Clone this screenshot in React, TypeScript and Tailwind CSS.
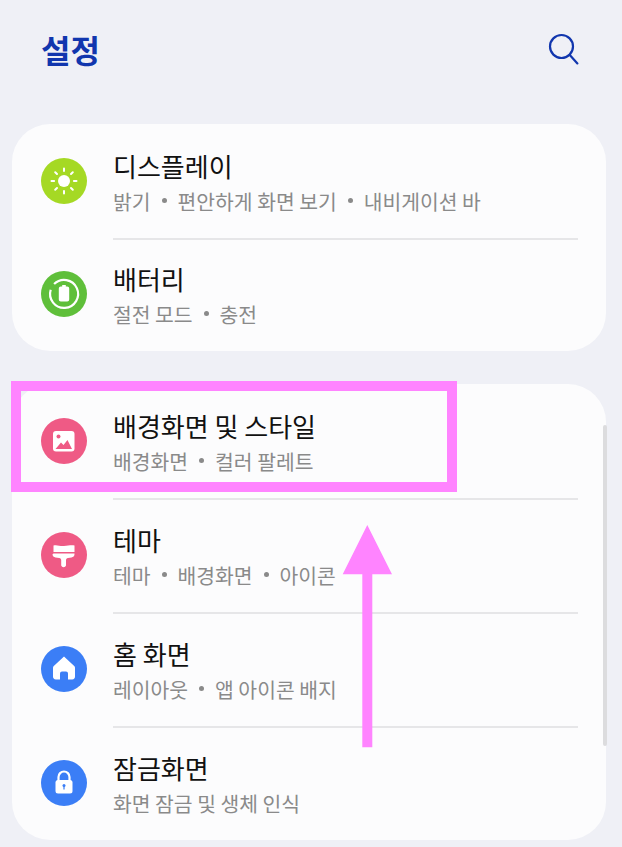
import type { ReactNode } from 'react';

function SunIcon() {
  return (
    <svg width="46" height="46" viewBox="0 0 46 46">
      <circle cx="23" cy="23" r="6" fill="#fff" />
      <g stroke="#fff" strokeWidth="2" strokeLinecap="round">
        <path d="M23 10.500v2.600M23 32.900v2.600M10.500 23h2.600M32.900 23h2.600M14.200 14.200l1.800 1.800M30 30l1.800 1.800M14.200 31.800L16 30M30 16l1.800-1.800" />
      </g>
    </svg>
  );
}

function BatteryIcon() {
  return (
    <svg width="46" height="46" viewBox="0 0 46 46" fill="none">
      <path d="M9.700 18.800A14 14 0 1 0 13.100 13.100" stroke="#fff" strokeWidth="2.200" />
      <path d="M21.200 14h3.600v1.500h1.400a2 2 0 0 1 2 2v11a2 2 0 0 1-2 2h-6.400a2 2 0 0 1-2-2v-11a2 2 0 0 1 2-2h1.400z" fill="#fff" />
    </svg>
  );
}

function WallpaperIcon() {
  return (
    <svg width="46" height="46" viewBox="0 0 46 46">
      <rect x="12" y="13" width="21.500" height="20.500" rx="3" fill="#fff" />
      <circle cx="17.500" cy="18.500" r="2" fill="#ef5a85" />
      <path d="M14.500 31l5.500-6.500 2.500 2.400 4-5 4.500 9.100z" fill="#ef5a85" />
    </svg>
  );
}

function BrushIcon() {
  return (
    <svg width="46" height="46" viewBox="0 0 46 46">
      <path d="M12.500 13.500c3.500-1 6 .8 10.500.5 4-.3 7.500-1.300 10.500-.5V20h-21z" fill="#fff" />
      <path d="M12.500 21.500h21v.8c0 1.800-1.300 3-3 3.200l-3.500.5c-1.300.2-2 1-2 2.200v5.300a2.500 2.500 0 0 1-4.800 0v-5.300c0-1.200-.7-2-2-2.200l-3.700-.5c-1.700-.2-3-1.400-3-3.200z" fill="#fff" />
    </svg>
  );
}

function HomeIcon() {
  return (
    <svg width="46" height="46" viewBox="0 0 46 46">
      <path
        d="M23 10.500L33.200 20a2.400 2.400 0 0 1 .8 1.800v8.800a2.800 2.800 0 0 1-2.800 2.800H27V27.500a2 2 0 0 0-2-2h-4a2 2 0 0 0-2 2v5.900h-4.200a2.800 2.800 0 0 1-2.800-2.800v-8.800c0-.7.3-1.300.8-1.800z"
        fill="#fff"
      />
    </svg>
  );
}

function LockIcon() {
  return (
    <svg width="46" height="46" viewBox="0 0 46 46">
      <path d="M17.500 21v-4a5.500 5.500 0 0 1 11 0v4" fill="none" stroke="#fff" strokeWidth="2.200" />
      <rect x="14.500" y="20" width="17" height="13.500" rx="2.500" fill="#fff" />
      <circle cx="23" cy="25.500" r="1.500" fill="#3b7ef6" />
      <rect x="22.400" y="26" width="1.200" height="3.500" fill="#3b7ef6" />
    </svg>
  );
}

function Row({ icon, color, title, sub, divider }: { icon: ReactNode; color: string; title: string; sub: string[]; divider?: boolean }) {
  return (
    <div className="h-[114px] flex flex-col">
      <div className="flex-1 flex items-center pl-[29px]">
        <div className={`w-[46px] h-[46px] rounded-full shrink-0 ${color}`}>{icon}</div>
        <div className="ml-[26px]">
          <div className="text-[26px] leading-[34px] text-[#111]">{title}</div>
          <div className="mt-[5px] text-[20.4px] leading-[26px] text-[#8a8a8a] flex items-center">
            {sub.map((s, i) => (
              <span key={s} className="flex items-center">
                {i > 0 && <span className="w-[5px] h-[5px] rounded-full bg-[#8a8a8a] mx-[11px]" />}
                {s}
              </span>
            ))}
          </div>
        </div>
      </div>
      {divider && <div className="h-[2px] -mb-[2px] bg-[#e6e6e8] ml-[101px] mr-[28px]" />}
    </div>
  );
}

export default function App() {
  return (
    <div className="relative w-[622px] h-[847px] overflow-hidden bg-[#eff0f6] font-['Noto_Sans_CJK_KR','Noto_Sans',sans-serif]">
      <header className="h-[124px] flex items-start justify-between pl-[41px] pr-[42px] pt-[28px]">
        <h1 className="text-[32px] leading-[42px] font-bold text-[#1136ae]">설정</h1>
        <svg width="32" height="32" viewBox="0 0 32 32" fill="none" stroke="#1136ae" strokeWidth="2.200" className="mt-[5px]">
          <circle cx="13.500" cy="13.500" r="11.500" />
          <path d="M21.800 22l7.600 8.400" strokeLinecap="round" />
        </svg>
      </header>

      <section className="mx-[12px] w-[594px] bg-[#fcfcfd] rounded-[38px] mb-[33px]">
        <Row icon={<SunIcon />} color="bg-[#a5d924]" title="디스플레이" sub={['밝기', '편안하게 화면 보기', '내비게이션 바']} divider />
        <div className="-mt-px">
          <Row icon={<BatteryIcon />} color="bg-[#5fbf3a]" title="배터리" sub={['절전 모드', '충전']} />
        </div>
      </section>

      <section className="relative mx-[12px] w-[594px] bg-[#fcfcfd] rounded-[38px]">
        <Row icon={<WallpaperIcon />} color="bg-[#ef5a85]" title="배경화면 및 스타일" sub={['배경화면', '컬러 팔레트']} divider />
        <Row icon={<BrushIcon />} color="bg-[#ef5a85]" title="테마" sub={['테마', '배경화면', '아이콘']} divider />
        <Row icon={<HomeIcon />} color="bg-[#3b7ef6]" title="홈 화면" sub={['레이아웃', '앱 아이콘 배지']} divider />
        <Row icon={<LockIcon />} color="bg-[#3b7ef6]" title="잠금화면" sub={['화면 잠금 및 생체 인식']} />
      </section>

      {/* scrollbar */}
      <div className="absolute left-[603px] top-[425px] w-[4px] h-[321px] rounded-full bg-[#dcdcde]" />

      {/* pink annotation */}
      <div className="absolute left-[11px] top-[381px] w-[446px] h-[111px] border-[10px] border-[#ff84ff]" />
      <svg className="absolute left-[341px] top-[524px]" width="52" height="224" viewBox="0 0 52 224">
        <path d="M26.300 1L51 50.300H31.300V223.300H21.300V50.300H1.700z" fill="#ff84ff" />
      </svg>
    </div>
  );
}
